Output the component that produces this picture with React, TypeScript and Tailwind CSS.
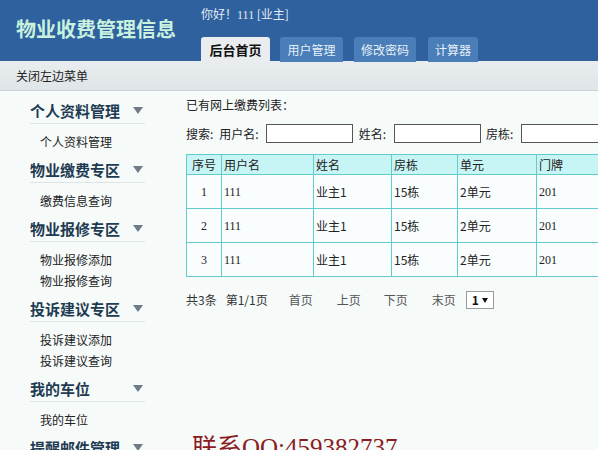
import React from 'react'

const menus = [
  { title: '个人资料管理', items: ['个人资料管理'] },
  { title: '物业缴费专区', items: ['缴费信息查询'] },
  { title: '物业报修专区', items: ['物业报修添加', '物业报修查询'] },
  { title: '投诉建议专区', items: ['投诉建议添加', '投诉建议查询'] },
  { title: '我的车位', items: ['我的车位'] },
  { title: '提醒邮件管理', items: ['提醒邮件管理'] },
]

const rows = [
  ['1', '111', '业主1', '15栋', '2单元', '201'],
  ['2', '111', '业主1', '15栋', '2单元', '201'],
  ['3', '111', '业主1', '15栋', '2单元', '201'],
]

function Arrow() {
  return (
    <svg width="10" height="7" viewBox="0 0 10 7" className="mr-[2px]">
      <path d="M0 0 L10 0 L5 7 Z" fill="#6f7c88" />
    </svg>
  )
}

export default function App(): React.JSX.Element {
  const font = { fontFamily: '"Liberation Serif", "Noto Sans CJK SC", serif' }
  return (
    <div
      className="relative h-[450px] w-[598px] overflow-hidden bg-[#f6fbfa] text-[12px] text-[#222]"
      style={{ fontFamily: '"Noto Sans CJK SC", "Noto Sans", sans-serif' }}
    >
      {/* header */}
      <div className="flex h-[61px] bg-[#2e619e]">
        <div className="w-[201px] shrink-0 pl-[16px] pt-[16px] text-[20px] font-bold leading-[26px] text-[#c9f1de]">
          物业收费管理信息
        </div>
        <div className="flex flex-col">
          <div className="pt-[5px] text-[12px] leading-[18px] text-[#e4ecf5]">
            你好！<span style={font}>111</span> [业主]
          </div>
          <div className="mt-[13px] flex items-end">
            <div className="flex h-[25px] w-[69px] items-center justify-center rounded-t-[3px] bg-[#e9edef] text-[13px] font-bold text-[#111]">
              后台首页
            </div>
            <div className="ml-[10px] flex h-[25px] w-[63px] items-center justify-center rounded-t-[3px] bg-[#4a7eb9] text-[12px] text-[#e8f0f8]">
              用户管理
            </div>
            <div className="ml-[11px] flex h-[25px] w-[62px] items-center justify-center rounded-t-[3px] bg-[#4a7eb9] text-[12px] text-[#e8f0f8]">
              修改密码
            </div>
            <div className="ml-[12px] flex h-[25px] w-[50px] items-center justify-center rounded-t-[3px] bg-[#4a7eb9] text-[12px] text-[#e8f0f8]">
              计算器
            </div>
          </div>
        </div>
      </div>

      {/* toolbar */}
      <div className="flex h-[30px] items-center border-b border-[#c9d1d5] bg-gradient-to-b from-[#e9edef] to-[#dfe5e8] pl-[16px] text-[12px] text-[#222]">
        关闭左边菜单
      </div>

      <div className="flex">
        {/* sidebar */}
        <div className="w-[186px] shrink-0 pl-[30px] pt-[8px]">
          {menus.map((m) => (
            <div key={m.title}>
              <div className="flex h-[25px] w-[115px] items-center justify-between border-b border-[#dde3e6] pb-[1px] text-[15px] font-bold leading-[20px] text-[#1f3b52]">
                <span>{m.title}</span>
                <Arrow />
              </div>
              <div className="pb-[6px] pl-[10px] pt-[7px]">
                {m.items.map((it) => (
                  <div key={it} className="h-[21px] text-[12px] leading-[21px] text-[#222]">
                    {it}
                  </div>
                ))}
              </div>
            </div>
          ))}
        </div>

        {/* content */}
        <div className="flex-1 pt-[5px]">
          <div className="leading-[18px]">已有网上缴费列表：</div>
          <div className="mt-[10px] flex h-[19px] items-center whitespace-nowrap">
            <span>搜索:</span>
            <span className="ml-[6px]">用户名:</span>
            <div className="ml-[7px] h-[19px] w-[87px] shrink-0 border border-[#555] bg-white" />
            <span className="ml-[6px]">姓名:</span>
            <div className="ml-[8px] h-[19px] w-[87px] shrink-0 border border-[#555] bg-white" />
            <span className="ml-[5px]">房栋:</span>
            <div className="ml-[8px] h-[19px] w-[100px] shrink-0 border border-[#555] bg-white" />
          </div>

          <table className="mt-[11px] w-[440px] border-collapse text-[12px]">
            <thead>
              <tr className="h-[20px] bg-[#c7f4f4]">
                <th className="w-[35px] border border-[#62cbcb] text-center font-normal">序号</th>
                <th className="w-[92px] border border-[#62cbcb] pl-[2px] text-left font-normal">用户名</th>
                <th className="w-[78px] border border-[#62cbcb] pl-[2px] text-left font-normal">姓名</th>
                <th className="w-[66px] border border-[#62cbcb] pl-[2px] text-left font-normal">房栋</th>
                <th className="w-[79px] border border-[#62cbcb] pl-[2px] text-left font-normal">单元</th>
                <th className="border border-[#62cbcb] pl-[2px] text-left font-normal">门牌</th>
              </tr>
            </thead>
            <tbody>
              {rows.map((r) => (
                <tr key={r[0]} className="h-[34px] bg-[#f9fdfd]">
                  <td className="border border-[#62cbcb] text-center" style={font}>{r[0]}</td>
                  <td className="border border-[#62cbcb] pl-[2px]" style={font}>{r[1]}</td>
                  <td className="border border-[#62cbcb] pl-[2px]">{r[2]}</td>
                  <td className="border border-[#62cbcb] pl-[2px]">{r[3]}</td>
                  <td className="border border-[#62cbcb] pl-[2px]">{r[4]}</td>
                  <td className="border border-[#62cbcb] pl-[2px]" style={font}>{r[5]}</td>
                </tr>
              ))}
            </tbody>
          </table>

          <div className="mt-[14px] flex h-[18px] items-center whitespace-nowrap text-[12px] text-[#333]">
            <span>共3条</span>
            <span className="ml-[9px]">第1/1页</span>
            <span className="ml-[21px] text-[#555]">首页</span>
            <span className="ml-[24px] text-[#555]">上页</span>
            <span className="ml-[23px] text-[#555]">下页</span>
            <span className="ml-[24px] text-[#555]">末页</span>
            <div className="ml-[10px] flex h-[18px] w-[28px] items-center justify-center gap-[3px] border border-[#999] bg-white text-[12px] font-bold text-[#111]">
              <span>1</span>
              <svg width="6" height="5" viewBox="0 0 6 5">
                <path d="M0 0 L6 0 L3 5 Z" fill="#111" />
              </svg>
            </div>
          </div>
        </div>
      </div>

      {/* watermark */}
      <div
        className="absolute left-[192px] top-[433px] whitespace-nowrap text-[25px] leading-[30px] text-[#8b1c22]"
        style={{ fontFamily: '"Liberation Serif", "Noto Sans CJK SC", serif' }}
      >
        联系QQ:459382737
      </div>
    </div>
  )
}
